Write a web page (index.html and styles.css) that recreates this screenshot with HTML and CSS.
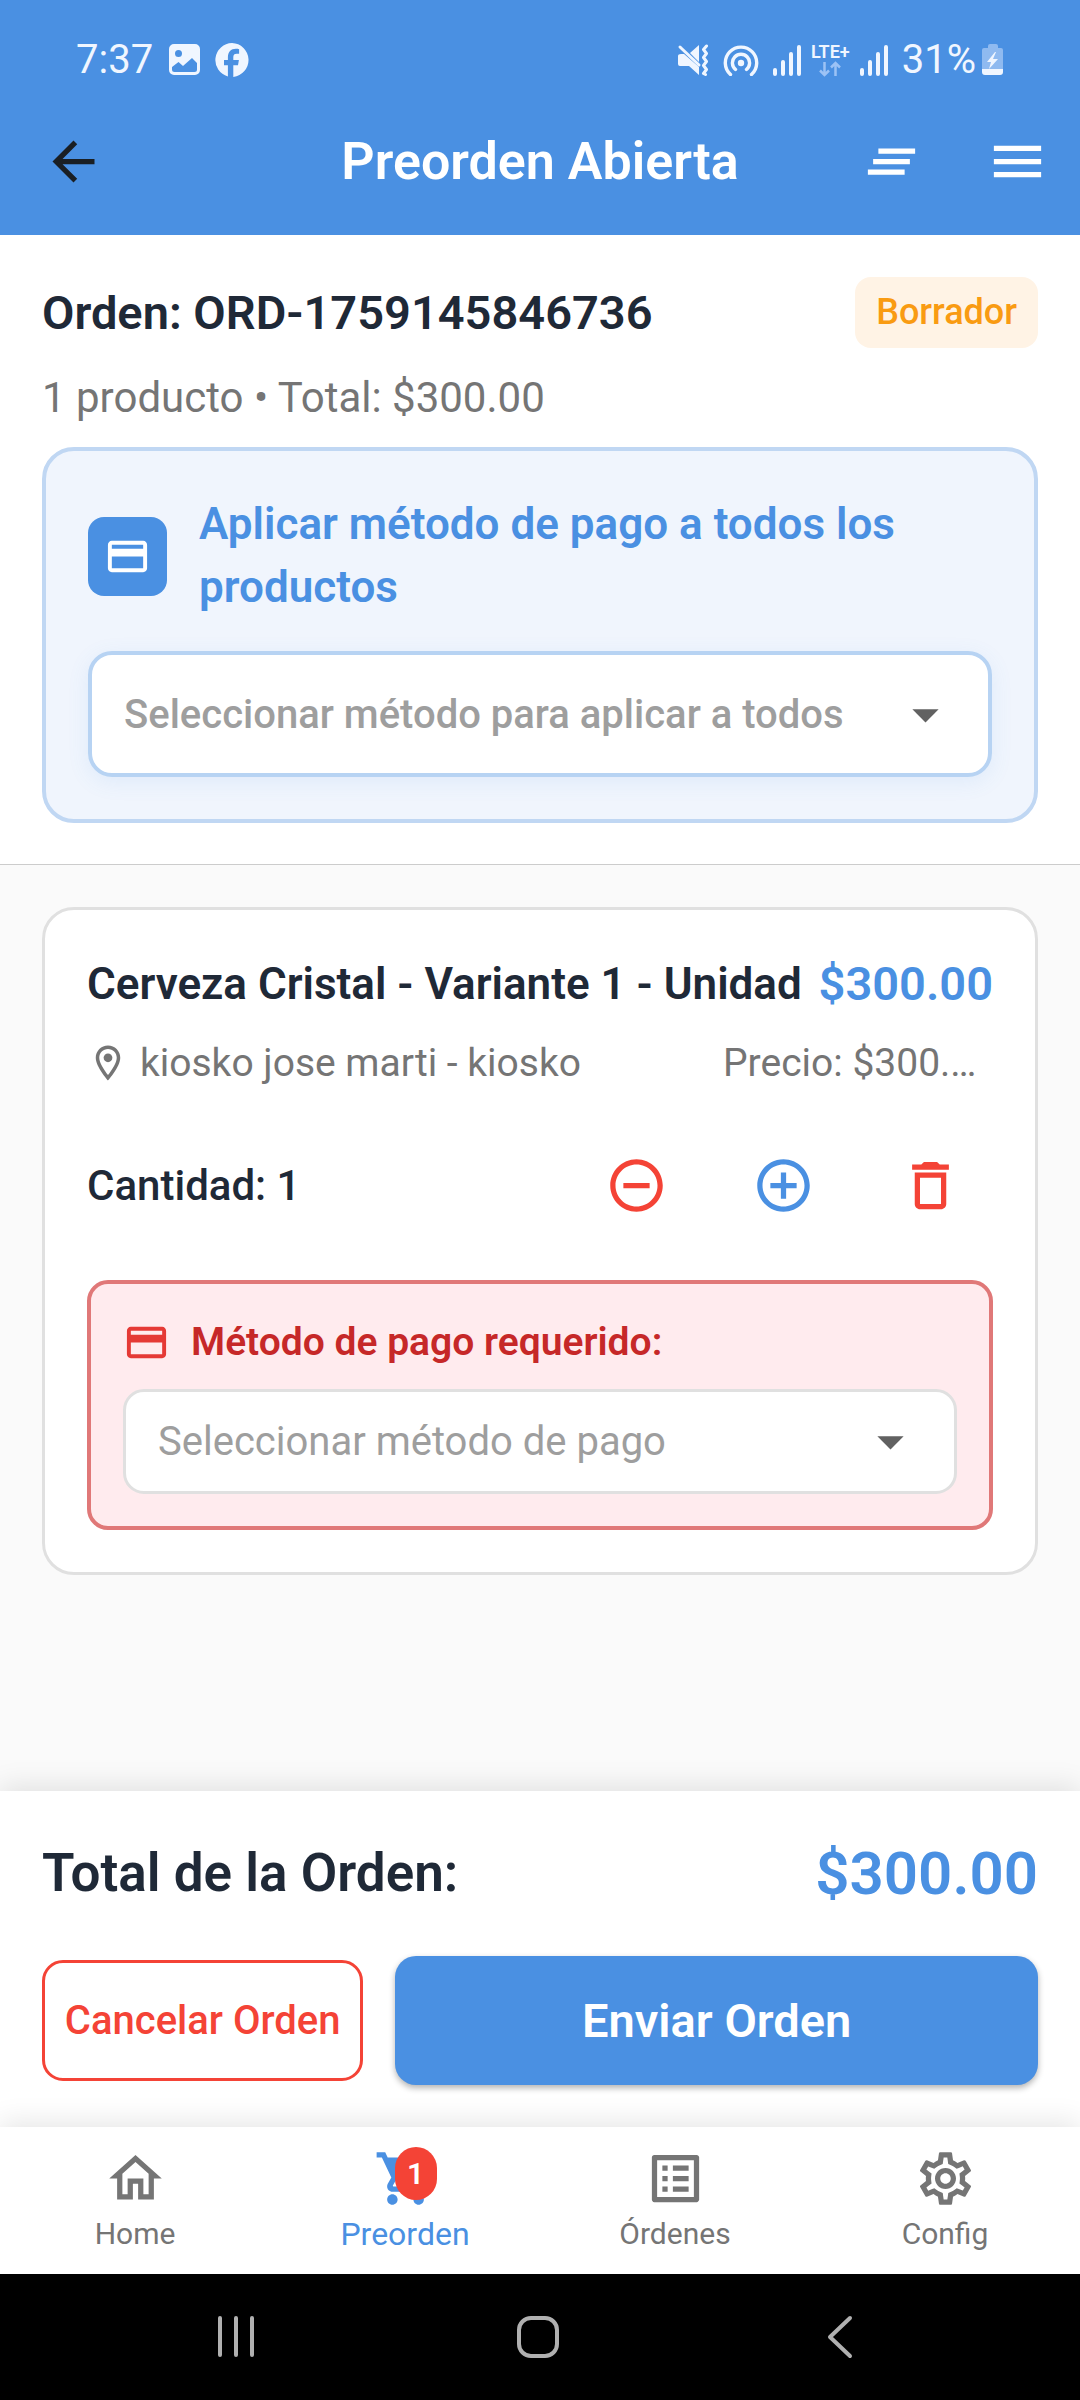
FILE: index.html
```html
<!DOCTYPE html>
<html lang="es">
<head>
  <meta charset="utf-8">
  <meta name="viewport" content="width=device-width, initial-scale=1">
  <title>Preorden Abierta</title>
  <link rel="stylesheet" href="styles.css">
</head>
<body>
  <header class="top">
    <div class="status">
      <span class="status-text">7:37</span>
      <svg class="status-picture" width="32" height="34" viewBox="0 0 32 34" aria-hidden="true">
        <path fill="currentColor" fill-rule="evenodd" d="M5 1h21a5 5 0 0 1 5 5v21a5 5 0 0 1-5 5H5a5 5 0 0 1-5-5V6a5 5 0 0 1 5-5zM9.500 7a3.500 3.500 0 1 0 0 7a3.500 3.500 0 0 0 0-7zM3 24v2.500q0 2.500 2.500 2.500h20q2.500 0 2.500-2.500V20l-5-5-9 8-4.500-4z"/>
      </svg>
      <svg class="status-facebook" width="34" height="34" viewBox="0 0 34 34" aria-hidden="true">
        <path fill="currentColor" d="M17 0a17 17 0 0 0-4.100 33.400V22.200H9V17h3.900v-2.400c0-6 3-8.800 8-8.800 1 0 2.500.2 3.200.4v4.500h-2.200c-2.700 0-3.600 1-3.600 3.600V17h5.600l-.9 5.200h-4.700v11.700A17 17 0 0 0 17 0z"/>
      </svg>
      <span class="status-space"></span>
      <svg width="32" height="32" viewBox="0 0 32 32" aria-hidden="true">
        <path fill="currentColor" d="M4 10h3l15 13v8L12 22H3a2 2 0 0 1-2-2v-8q0-2 3-2zM22 1v17l-9-9z"/>
        <path d="M3 3l19 18" fill="none" stroke="currentColor" stroke-width="3" stroke-linecap="round"/>
        <path d="M29.500 2l-3 3.500 3 4-3 4 3 4-3 4 3 4-3 4 2 1" fill="none" stroke="currentColor" stroke-width="3" stroke-linecap="round" stroke-linejoin="round"/>
      </svg>
      <svg class="status-hotspot" width="36" height="32" viewBox="0 0 36 32" aria-hidden="true">
        <circle cx="18" cy="19" r="3.200" fill="currentColor"/>
        <path d="M12.500 25.500a8.600 8.600 0 1 1 11 0M7.500 30.500a15.700 15.700 0 1 1 21 0" fill="none" stroke="currentColor" stroke-width="3.400" stroke-linecap="round"/>
      </svg>
      <svg class="status-signal" width="28" height="32" viewBox="0 0 28 32" aria-hidden="true">
        <path d="M2 26v4M10 18v12M18 10v20M26 3v27" fill="none" stroke="currentColor" stroke-width="4" stroke-linecap="round"/>
      </svg>
      <span class="status-lte">
        <span>LTE+</span>
        <svg width="24" height="16" viewBox="0 0 24 16" aria-hidden="true">
          <path d="M6.500 1v13M2 9.500l4.500 4.500 4.500-4.500M17.500 15V2M13 6.500l4.500-4.500 4.500 4.500" fill="none" stroke="currentColor" stroke-width="2.500"/>
        </svg>
      </span>
      <svg class="status-signal" width="28" height="32" viewBox="0 0 28 32" aria-hidden="true">
        <path d="M2 26v4M10 18v12M18 10v20M26 3v27" fill="none" stroke="currentColor" stroke-width="4" stroke-linecap="round"/>
      </svg>
      <span class="status-text">31%</span>
      <svg class="status-battery" width="22" height="32" viewBox="0 0 22 32" aria-hidden="true">
        <path fill="#8fbaf0" d="M6 2q0-2 2-2h6q2 0 2 2v2h3q2 0 2 2v19H0V6q0-2 2-2h4z"/>
        <path fill="currentColor" d="M0 25h21v3q0 3-3 3H3q-3 0-3-3zM13 8L5 18h4l-2 7 9-10h-5l3-7z"/>
      </svg>
    </div>
    <div class="appbar">
      <button class="bar-button bar-back" type="button" aria-label="Volver">
        <svg class="icon" viewBox="0 0 24 24"><path d="M20 11H7.830l5.590-5.590L12 4l-8 8 8 8 1.410-1.410L7.830 13H20v-2z"/></svg>
      </button>
      <h1 class="title">Preorden Abierta</h1>
      <div class="bar-actions">
        <button class="bar-button" type="button" aria-label="Limpiar todo">
          <svg class="icon" viewBox="0 0 24 24"><path d="M5 13h14v-2H5v2zm-2 4h14v-2H3v2zM7 7v2h14V7H7z"/></svg>
        </button>
        <button class="bar-button" type="button" aria-label="Menú">
          <svg class="icon" viewBox="0 0 24 24"><path d="M3 18h18v-2H3v2zm0-5h18v-2H3v2zm0-7v2h18V6H3z"/></svg>
        </button>
      </div>
    </div>
  </header>

  <section class="order">
    <div class="order-head">
      <h2 class="order-title">Orden: ORD-1759145846736</h2>
      <span class="tag">Borrador</span>
    </div>
    <p class="order-summary">1 producto • Total: $300.00</p>
    <div class="apply">
      <div class="apply-head">
        <span class="apply-icon">
          <svg class="icon-small" viewBox="0 0 24 24" aria-hidden="true"><path d="M20 4H4c-1.110 0-1.990.89-1.990 2L2 18c0 1.110.89 2 2 2h16c1.110 0 2-.89 2-2V6c0-1.110-.89-2-2-2zm0 14H4v-6h16v6zm0-10H4V6h16v2z"/></svg>
        </span>
        <label class="apply-label" for="method-all">Aplicar método de pago a todos los productos</label>
      </div>
      <div class="picker">
        <select class="select select-all" id="method-all">
          <option>Seleccionar método para aplicar a todos</option>
        </select>
        <svg class="icon picker-arrow" viewBox="0 0 24 24" aria-hidden="true"><path d="M7 10l5 5 5-5z"/></svg>
      </div>
    </div>
  </section>

  <main class="items">
    <article class="item">
      <div class="item-head">
        <h3 class="item-name">Cerveza Cristal - Variante 1 - Unidad</h3>
        <span class="item-total">$300.00</span>
      </div>
      <div class="item-info">
        <svg class="icon-pin" viewBox="0 0 24 24" aria-hidden="true"><path d="M12 2C8.130 2 5 5.130 5 9c0 5.250 7 13 7 13s7-7.750 7-13c0-3.870-3.130-7-7-7zM7 9c0-2.760 2.240-5 5-5s5 2.240 5 5c0 2.880-2.880 7.190-5 9.880C9.920 16.210 7 11.850 7 9z"/><circle cx="12" cy="9" r="2.500"/></svg>
        <span class="item-place">kiosko jose marti - kiosko</span>
        <span class="item-price">Precio: $300.…</span>
      </div>
      <div class="quantity">
        <span class="quantity-text">Cantidad: 1</span>
        <button class="quantity-button danger" type="button" aria-label="Quitar uno">
          <svg class="icon" viewBox="0 0 24 24"><path d="M7 11v2h10v-2H7zm5-9C6.480 2 2 6.480 2 12s4.480 10 10 10 10-4.480 10-10S17.520 2 12 2zm0 18c-4.410 0-8-3.590-8-8s3.590-8 8-8 8 3.590 8 8-3.590 8-8 8z"/></svg>
        </button>
        <button class="quantity-button accent" type="button" aria-label="Agregar uno">
          <svg class="icon" viewBox="0 0 24 24"><path d="M13 7h-2v4H7v2h4v4h2v-4h4v-2h-4V7zm-1-5C6.480 2 2 6.480 2 12s4.480 10 10 10 10-4.480 10-10S17.520 2 12 2zm0 18c-4.410 0-8-3.590-8-8s3.590-8 8-8 8 3.590 8 8-3.590 8-8 8z"/></svg>
        </button>
        <button class="quantity-button danger" type="button" aria-label="Eliminar">
          <svg class="icon" viewBox="0 0 24 24"><path d="M6 19c0 1.100.9 2 2 2h8c1.100 0 2-.9 2-2V7H6v12zM8 9h8v10H8V9zm7.500-5l-1-1h-5l-1 1H5v2h14V4z"/></svg>
        </button>
      </div>
      <div class="required">
        <div class="required-head">
          <svg class="icon-small" viewBox="0 0 24 24" aria-hidden="true"><path d="M20 4H4c-1.110 0-1.990.89-1.990 2L2 18c0 1.110.89 2 2 2h16c1.110 0 2-.89 2-2V6c0-1.110-.89-2-2-2zm0 14H4v-6h16v6zm0-10H4V6h16v2z"/></svg>
          <label class="required-label" for="method-item">Método de pago requerido:</label>
        </div>
        <div class="picker">
          <select class="select select-item" id="method-item">
            <option>Seleccionar método de pago</option>
          </select>
          <svg class="icon picker-arrow" viewBox="0 0 24 24" aria-hidden="true"><path d="M7 10l5 5 5-5z"/></svg>
        </div>
      </div>
    </article>
  </main>

  <section class="checkout">
    <div class="total">
      <span class="total-label">Total de la Orden:</span>
      <span class="total-value">$300.00</span>
    </div>
    <div class="actions">
      <button class="action cancel" type="button">Cancelar Orden</button>
      <button class="action send" type="button">Enviar Orden</button>
    </div>
  </section>

  <nav class="tabs">
    <a class="tab" href="#home">
      <svg class="icon" viewBox="0 0 24 24" aria-hidden="true"><path d="M12 5.690l5 4.500V18h-2v-6H9v6H7v-7.810l5-4.500M12 3L2 12h3v8h6v-6h2v6h6v-8h3L12 3z"/></svg>
      <span>Home</span>
    </a>
    <a class="tab tab-current" href="#preorden">
      <span class="tab-icon">
        <svg class="icon" viewBox="0 0 24 24" aria-hidden="true"><path d="M7 18c-1.100 0-1.990.9-1.990 2S5.900 22 7 22s2-.9 2-2-.9-2-2-2zM1 2v2h2l3.600 7.590-1.350 2.450c-.16.28-.25.61-.25.96 0 1.100.9 2 2 2h12v-2H7.420c-.14 0-.25-.11-.25-.25l.03-.12.9-1.630h7.450c.75 0 1.410-.41 1.750-1.030l3.580-6.490c.08-.14.12-.31.12-.48 0-.55-.45-1-1-1H5.210l-.94-2H1zm16 16c-1.100 0-1.990.9-1.990 2s.89 2 1.990 2 2-.9 2-2-.9-2-2-2z"/></svg>
        <span class="badge">1</span>
      </span>
      <span>Preorden</span>
    </a>
    <a class="tab" href="#ordenes">
      <svg class="icon" viewBox="0 0 24 24" aria-hidden="true"><path d="M19 5v14H5V5h14m1.100-2H3.900c-.5 0-.9.4-.9.9v16.200c0 .4.4.9.9.9h16.200c.4 0 .9-.5.9-.9V3.900c0-.5-.5-.9-.9-.9zM11 7h6v2h-6V7zm0 4h6v2h-6v-2zm0 4h6v2h-6zM7 7h2v2H7zm0 4h2v2H7zm0 4h2v2H7z"/></svg>
      <span>Órdenes</span>
    </a>
    <a class="tab" href="#config">
      <svg class="icon" viewBox="0 0 24 24" aria-hidden="true"><path d="M19.430 12.980c.04-.32.07-.64.07-.98 0-.34-.03-.66-.07-.98l2.110-1.650c.19-.15.24-.42.12-.64l-2-3.460c-.09-.16-.26-.25-.44-.25-.06 0-.12.01-.17.03l-2.490 1c-.52-.4-1.080-.73-1.690-.98l-.38-2.650C14.460 2.180 14.250 2 14 2h-4c-.25 0-.46.18-.49.42l-.38 2.650c-.61.25-1.170.59-1.690.98l-2.490-1c-.06-.02-.12-.03-.18-.03-.17 0-.34.09-.43.25l-2 3.460c-.13.22-.07.49.12.64l2.110 1.650c-.04.32-.07.65-.07.98 0 .33.03.66.07.98l-2.110 1.650c-.19.15-.24.42-.12.64l2 3.460c.09.16.26.25.44.25.06 0 .12-.01.17-.03l2.490-1c.52.4 1.080.73 1.690.98l.38 2.650c.03.24.24.42.49.42h4c.25 0 .46-.18.49-.42l.38-2.650c.61-.25 1.170-.59 1.690-.98l2.490 1c.06.02.12.03.18.03.17 0 .34-.09.43-.25l2-3.460c.12-.22.07-.49-.12-.64l-2.110-1.650zm-1.980-1.710c.04.31.05.52.05.73 0 .21-.02.43-.05.73l-.14 1.130.89.7 1.080.84-.7 1.210-1.270-.51-1.040-.42-.9.68c-.43.32-.84.56-1.250.73l-1.060.43-.16 1.130-.2 1.350h-1.400l-.19-1.350-.16-1.130-1.060-.43c-.43-.18-.83-.41-1.230-.71l-.91-.7-1.060.43-1.270.51-.7-1.210 1.080-.84.89-.7-.14-1.130c-.03-.31-.05-.54-.05-.74s.02-.43.05-.73l.14-1.130-.89-.7-1.080-.84.7-1.210 1.270.51 1.040.42.9-.68c.43-.32.84-.56 1.250-.73l1.060-.43.16-1.130.2-1.350h1.390l.19 1.350.16 1.130 1.060.43c.43.18.83.41 1.230.71l.91.7 1.060-.43 1.270-.51.7 1.210-1.070.85-.89.7.14 1.130zM12 8c-2.210 0-4 1.790-4 4s1.790 4 4 4 4-1.790 4-4-1.790-4-4-4zm0 6c-1.100 0-2-.9-2-2s.9-2 2-2 2 .9 2 2-.9 2-2 2z"/></svg>
      <span>Config</span>
    </a>
  </nav>

  <footer class="system">
    <button class="system-button" type="button" aria-label="Recientes">
      <svg width="48" height="48" viewBox="0 0 48 48"><path d="M8 5v37M24 5v37M40 5v37"/></svg>
    </button>
    <button class="system-button" type="button" aria-label="Inicio">
      <svg width="48" height="48" viewBox="0 0 48 48"><rect x="5" y="5" width="38" height="38" rx="12"/></svg>
    </button>
    <button class="system-button" type="button" aria-label="Atrás">
      <svg width="48" height="48" viewBox="0 0 48 48"><path d="M34 5L14 24l20 19"/></svg>
    </button>
  </footer>
</body>
</html>
```
FILE: styles.css
```css
:root {
  --blue: #4a90e2;
  --red: #f44336;
  --ink: #1f2937;
  --gray: #757575;
  --hint: #9e9e9e;
  --line: #e0e0e0;
}

* {
  box-sizing: border-box;
}

body {
  margin: 0;
  min-height: 100vh;
  display: flex;
  flex-direction: column;
  background: #fafafa;
  color: var(--ink);
  font-family: Roboto, "Liberation Sans", sans-serif;
  font-size: 40px;
}

h1, h2, h3, p {
  margin: 0;
}

button {
  padding: 0;
  border: 0;
  background: none;
  color: inherit;
  font: inherit;
  cursor: pointer;
}

svg {
  display: block;
  flex: none;
}

.icon {
  width: 63px;
  height: 63px;
  fill: currentColor;
}

.icon-small {
  width: 47px;
  height: 47px;
  fill: currentColor;
}

.icon-pin {
  width: 42px;
  height: 42px;
  fill: currentColor;
}

/* Header */

.top {
  padding-top: 32px;
  background: var(--blue);
  color: #fff;
}

.status {
  display: flex;
  align-items: center;
  height: 56px;
  padding: 0 76px;
  color: #f0f6ff;
}

.status-text {
  font-size: 40px;
  line-height: 48px;
}

.status-picture {
  margin-left: 16px;
}

.status-facebook,
.status-hotspot,
.status-signal {
  margin-left: 14px;
}

.status-space {
  flex: 1;
}

.status-lte {
  display: flex;
  flex-direction: column;
  align-items: center;
  margin: 0 -4px 0 10px;
  font-size: 18px;
  font-weight: 600;
  line-height: 18px;
}

.status-lte svg {
  color: #9cc2f5;
}

.status-signal + .status-text {
  margin-left: 14px;
}

.status-battery {
  margin-left: 6px;
}

.appbar {
  display: grid;
  grid-template-columns: 1fr auto 1fr;
  align-items: center;
  height: 147px;
}

.bar-button {
  display: flex;
  align-items: center;
  justify-content: center;
  width: 126px;
  height: 126px;
}

.bar-back {
  width: 147px;
  color: #1a1f24;
}

.bar-actions {
  display: flex;
  justify-content: flex-end;
}

.title {
  font-size: 52px;
  font-weight: 600;
  line-height: 64px;
}

/* Order summary */

.order {
  padding: 42px 42px 41px;
  border-bottom: 1px solid #ccc;
  background: #fff;
}

.order-head {
  display: flex;
  align-items: center;
  justify-content: space-between;
}

.order-title {
  font-size: 47px;
  font-weight: 600;
  line-height: 64px;
}

.tag {
  padding: 10px 21px;
  border-radius: 16px;
  background: #fff3e5;
  color: #f99b12;
  font-size: 36px;
  font-weight: 500;
  line-height: 51px;
}

.order-summary {
  margin: 21px 0;
  color: var(--gray);
  font-size: 42px;
  line-height: 57px;
}

.apply {
  padding: 42px;
  border: 4px solid #c0d7f3;
  border-radius: 32px;
  background: #f0f5fd;
}

.apply-head {
  display: flex;
  align-items: center;
  gap: 32px;
  margin-bottom: 32px;
}

.apply-icon {
  padding: 16px;
  border-radius: 16px;
  background: var(--blue);
  color: #fff;
}

.apply-label {
  color: var(--blue);
  font-size: 44px;
  font-weight: 600;
  line-height: 63px;
}

.picker {
  display: grid;
  align-items: center;
}

.select {
  grid-area: 1 / 1;
  width: 100%;
  padding: 0 95px 0 32px;
  appearance: none;
  background: #fff;
  color: var(--hint);
  font-family: inherit;
  font-size: 40px;
}

.select-all {
  height: 126px;
  border: 4px solid #b7d3f3;
  border-radius: 24px;
  box-shadow: 0 5px 21px rgba(74, 144, 226, 0.1);
  font-weight: 500;
}

.select-item {
  height: 105px;
  border: 3px solid var(--line);
  border-radius: 21px;
}

.picker-arrow {
  grid-area: 1 / 1;
  justify-self: end;
  margin-right: 35px;
  color: #616161;
  pointer-events: none;
}

/* Items */

.items {
  flex: 1;
  padding: 42px;
}

.item {
  padding: 42px;
  border: 3px solid var(--line);
  border-radius: 32px;
  background: #fff;
}

.item-head {
  display: flex;
  align-items: center;
  justify-content: space-between;
  height: 63px;
  white-space: nowrap;
}

.item-name {
  font-size: 44px;
  font-weight: 600;
}

.item-total {
  color: var(--blue);
  font-size: 47px;
  font-weight: 600;
}

.item-info {
  display: flex;
  align-items: center;
  gap: 11px;
  margin-top: 21px;
  color: var(--gray);
  font-size: 39px;
  line-height: 54px;
}

.item-place {
  flex: 1;
}

.item-price {
  width: 270px;
  white-space: nowrap;
}

.quantity {
  display: flex;
  align-items: center;
  gap: 21px;
  margin: 32px 0;
}

.quantity-text {
  flex: 1;
  font-size: 42px;
  font-weight: 500;
}

.quantity-button {
  display: flex;
  align-items: center;
  justify-content: center;
  width: 126px;
  height: 126px;
}

.danger {
  color: var(--red);
}

.accent {
  color: var(--blue);
}

.required {
  padding: 32px;
  border: 4px solid #e07878;
  border-radius: 21px;
  background: #ffebee;
}

.required-head {
  display: flex;
  align-items: center;
  gap: 21px;
  margin-bottom: 21px;
  color: #e53935;
}

.required-label {
  color: #c62828;
  font-size: 39px;
  font-weight: 600;
  line-height: 52px;
}

/* Checkout */

.checkout {
  padding: 42px;
  background: #fff;
  box-shadow: 0 -5px 26px rgba(0, 0, 0, 0.1);
}

.total {
  display: flex;
  align-items: center;
  justify-content: space-between;
  margin-bottom: 42px;
  line-height: 81px;
}

.total-label {
  font-size: 53px;
  font-weight: 600;
}

.total-value {
  color: var(--blue);
  font-size: 60px;
  font-weight: 600;
}

.actions {
  display: grid;
  grid-template-columns: 1fr 2fr;
  align-items: center;
  gap: 32px;
}

.action {
  border-radius: 21px;
  white-space: nowrap;
}

.cancel {
  height: 121px;
  border: 3px solid var(--red);
  color: var(--red);
  font-weight: 500;
}

.send {
  height: 129px;
  background: var(--blue);
  box-shadow: 0 3px 6px rgba(0, 0, 0, 0.3);
  color: #fff;
  font-size: 47px;
  font-weight: 600;
}

/* Bottom tabs */

.tabs {
  display: grid;
  grid-template-columns: repeat(4, 1fr);
  height: 147px;
  padding-top: 20px;
  background: #fff;
  box-shadow: 0 -5px 26px rgba(0, 0, 0, 0.1);
}

.tab {
  display: flex;
  flex-direction: column;
  align-items: center;
  color: var(--gray);
  font-size: 30px;
  line-height: 48px;
  text-decoration: none;
}

.tab-current {
  color: var(--blue);
  font-size: 32px;
}

.tab-icon {
  position: relative;
}

.badge {
  position: absolute;
  top: 0;
  right: 0;
  width: 42px;
  border-radius: 21px;
  background: var(--red);
  color: #fff;
  font-size: 30px;
  font-weight: 600;
  line-height: 53px;
  text-align: center;
}

/* System navigation */

.system {
  display: grid;
  grid-template-columns: repeat(3, 1fr);
  justify-items: center;
  height: 126px;
  padding: 0 89px 0 85px;
  background: #000;
}

.system-button {
  width: 126px;
}

.system-button svg {
  margin: 0 auto;
  fill: none;
  stroke: #b0b0b0;
  stroke-width: 4;
  stroke-linecap: round;
  stroke-linejoin: round;
}
```
